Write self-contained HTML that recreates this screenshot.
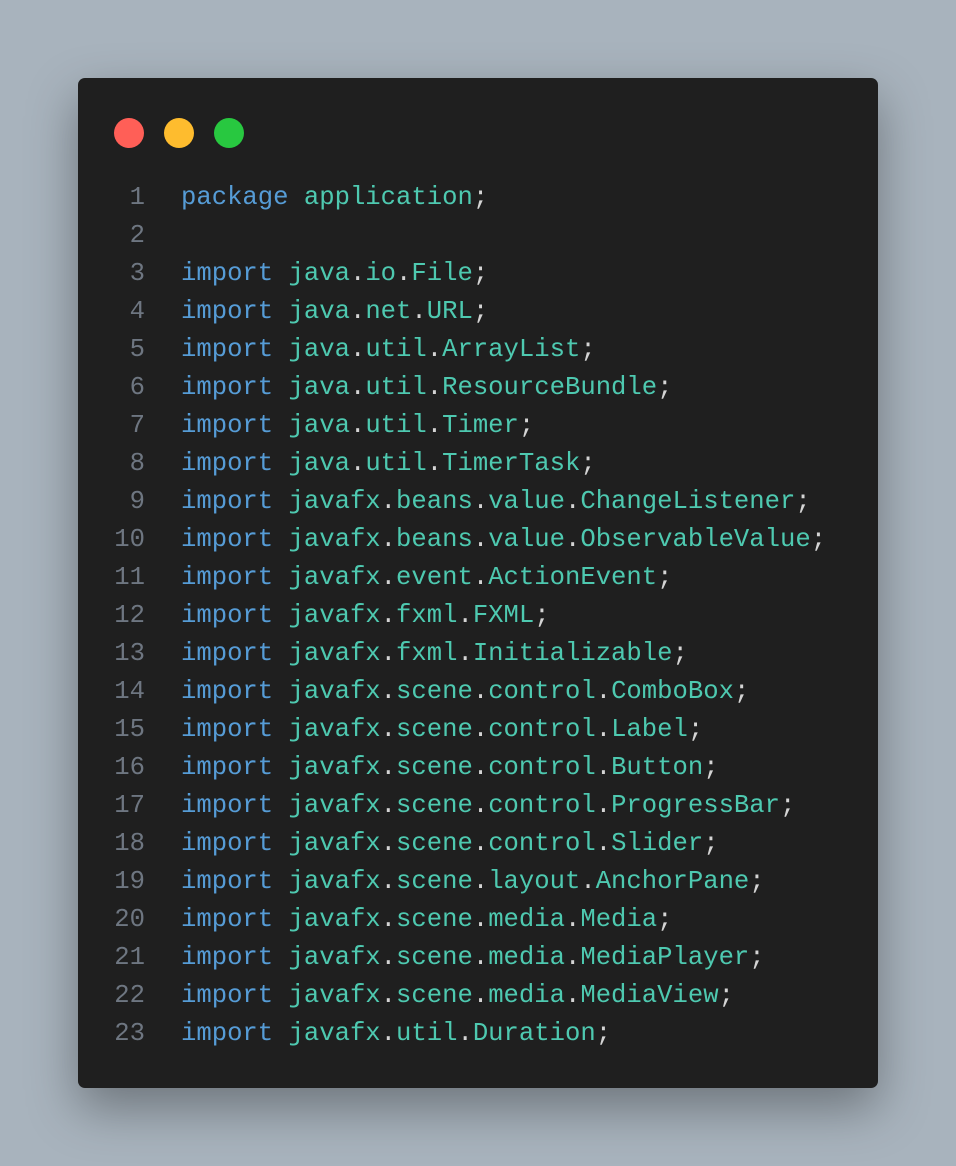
<!DOCTYPE html>
<html><head><style>
body{margin:0;width:956px;height:1166px;background:#a8b3bd;position:relative;overflow:hidden;}
.card{position:absolute;left:78px;top:78px;width:800px;height:1010px;background:#1f1f1f;border-radius:7px;box-shadow:0 20px 50px rgba(0,0,0,0.35);}
.dot{position:absolute;top:40px;width:30px;height:30px;border-radius:50%;}
.code{position:absolute;left:0;top:101px;font-family:"Liberation Mono",monospace;font-size:25.6px;line-height:38px;white-space:pre;color:#d4d4d4;}
.ln{display:inline-block;width:67px;text-align:right;color:#6e7681;margin-right:36px;}
.k{color:#569cd6}.t{color:#4ec9b0}
</style></head><body>
<div class="card">
<div class="dot" style="left:36px;background:#ff5f57"></div>
<div class="dot" style="left:86px;background:#febc2e"></div>
<div class="dot" style="left:136px;background:#28c840"></div>
<div class="code"><div><span class="ln">1</span><span class="k">package</span> <span class="t">application</span>;</div><div><span class="ln">2</span></div><div><span class="ln">3</span><span class="k">import</span> <span class="t">java</span>.<span class="t">io</span>.<span class="t">File</span>;</div><div><span class="ln">4</span><span class="k">import</span> <span class="t">java</span>.<span class="t">net</span>.<span class="t">URL</span>;</div><div><span class="ln">5</span><span class="k">import</span> <span class="t">java</span>.<span class="t">util</span>.<span class="t">ArrayList</span>;</div><div><span class="ln">6</span><span class="k">import</span> <span class="t">java</span>.<span class="t">util</span>.<span class="t">ResourceBundle</span>;</div><div><span class="ln">7</span><span class="k">import</span> <span class="t">java</span>.<span class="t">util</span>.<span class="t">Timer</span>;</div><div><span class="ln">8</span><span class="k">import</span> <span class="t">java</span>.<span class="t">util</span>.<span class="t">TimerTask</span>;</div><div><span class="ln">9</span><span class="k">import</span> <span class="t">javafx</span>.<span class="t">beans</span>.<span class="t">value</span>.<span class="t">ChangeListener</span>;</div><div><span class="ln">10</span><span class="k">import</span> <span class="t">javafx</span>.<span class="t">beans</span>.<span class="t">value</span>.<span class="t">ObservableValue</span>;</div><div><span class="ln">11</span><span class="k">import</span> <span class="t">javafx</span>.<span class="t">event</span>.<span class="t">ActionEvent</span>;</div><div><span class="ln">12</span><span class="k">import</span> <span class="t">javafx</span>.<span class="t">fxml</span>.<span class="t">FXML</span>;</div><div><span class="ln">13</span><span class="k">import</span> <span class="t">javafx</span>.<span class="t">fxml</span>.<span class="t">Initializable</span>;</div><div><span class="ln">14</span><span class="k">import</span> <span class="t">javafx</span>.<span class="t">scene</span>.<span class="t">control</span>.<span class="t">ComboBox</span>;</div><div><span class="ln">15</span><span class="k">import</span> <span class="t">javafx</span>.<span class="t">scene</span>.<span class="t">control</span>.<span class="t">Label</span>;</div><div><span class="ln">16</span><span class="k">import</span> <span class="t">javafx</span>.<span class="t">scene</span>.<span class="t">control</span>.<span class="t">Button</span>;</div><div><span class="ln">17</span><span class="k">import</span> <span class="t">javafx</span>.<span class="t">scene</span>.<span class="t">control</span>.<span class="t">ProgressBar</span>;</div><div><span class="ln">18</span><span class="k">import</span> <span class="t">javafx</span>.<span class="t">scene</span>.<span class="t">control</span>.<span class="t">Slider</span>;</div><div><span class="ln">19</span><span class="k">import</span> <span class="t">javafx</span>.<span class="t">scene</span>.<span class="t">layout</span>.<span class="t">AnchorPane</span>;</div><div><span class="ln">20</span><span class="k">import</span> <span class="t">javafx</span>.<span class="t">scene</span>.<span class="t">media</span>.<span class="t">Media</span>;</div><div><span class="ln">21</span><span class="k">import</span> <span class="t">javafx</span>.<span class="t">scene</span>.<span class="t">media</span>.<span class="t">MediaPlayer</span>;</div><div><span class="ln">22</span><span class="k">import</span> <span class="t">javafx</span>.<span class="t">scene</span>.<span class="t">media</span>.<span class="t">MediaView</span>;</div><div><span class="ln">23</span><span class="k">import</span> <span class="t">javafx</span>.<span class="t">util</span>.<span class="t">Duration</span>;</div></div>
</div>
</body></html>
